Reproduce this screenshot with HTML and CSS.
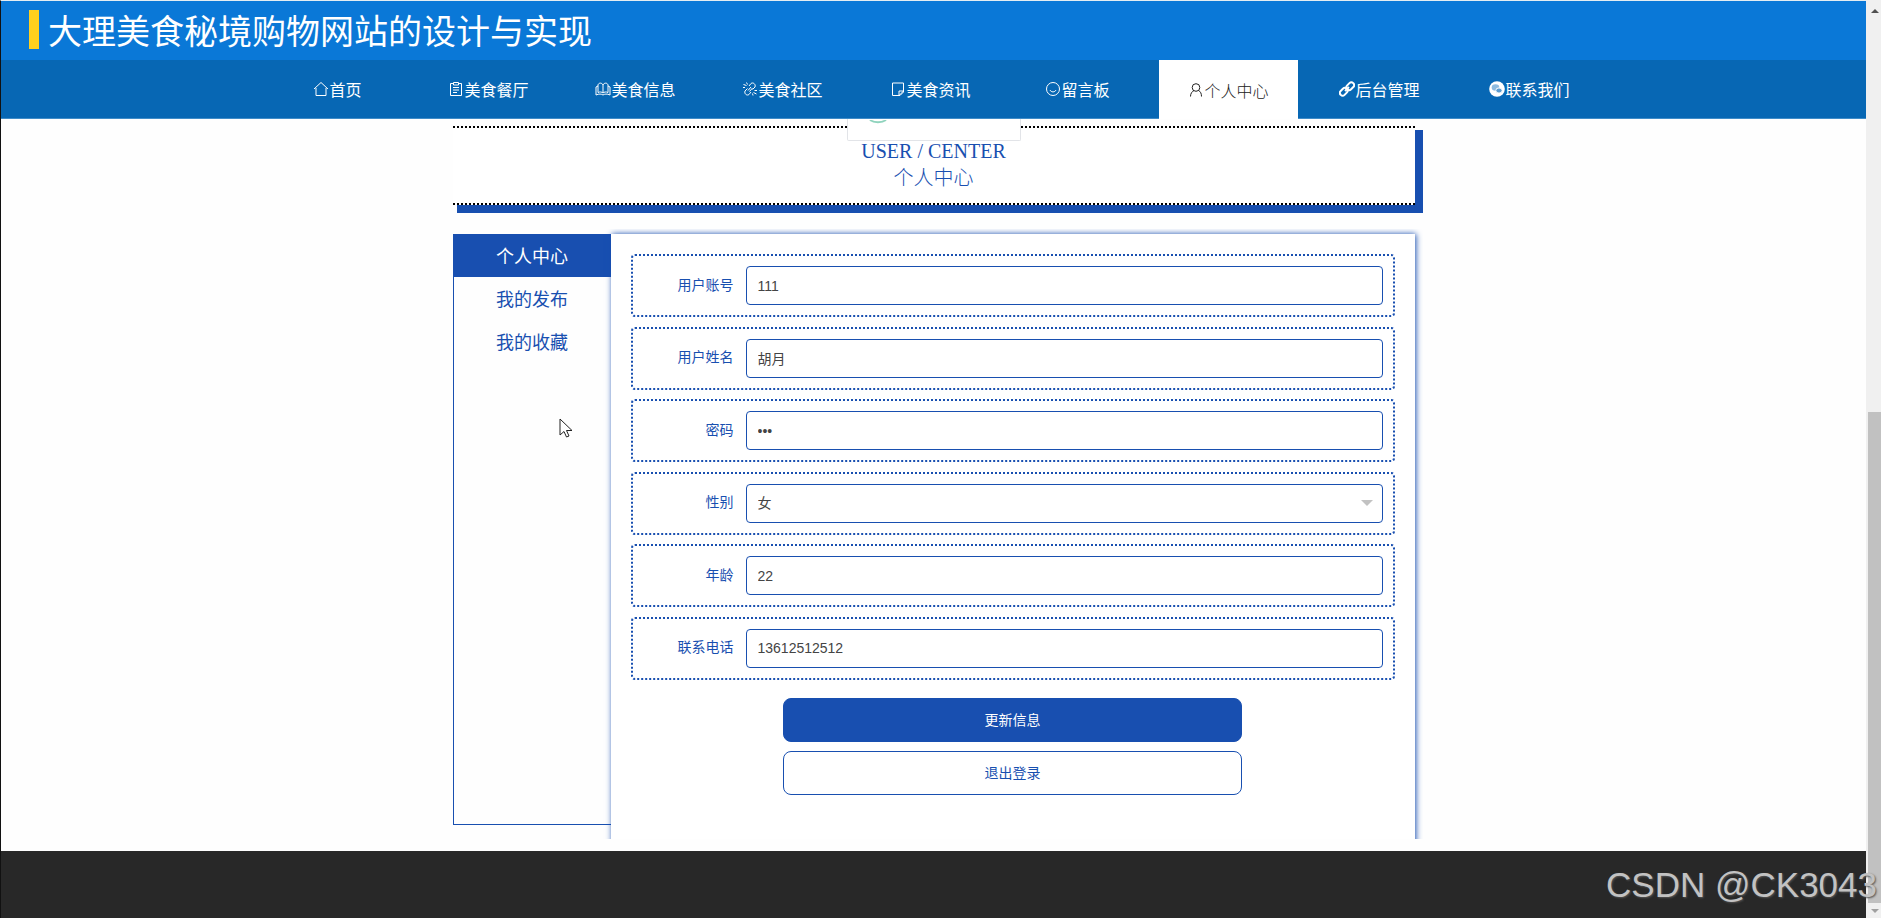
FILE: index.html
```html
<!DOCTYPE html>
<html lang="zh-CN">
<head>
<meta charset="utf-8">
<title>大理美食秘境购物网站的设计与实现</title>
<link rel="stylesheet" href="styles.css">
</head>
<body>
<div class="page">
  <header class="header">
    <h1 class="brand">大理美食秘境购物网站的设计与实现</h1>
    <nav class="nav">
      <a class="nav-link" href="#"><svg class="icon" viewBox="0 0 16 16"><path d="M1 8 8 1.500 15 8M3 7v7.500h10V7"/></svg>首页</a>
      <a class="nav-link" href="#"><svg class="icon" viewBox="0 0 16 16"><path d="M5 2.500H2.500v12h11v-12H11M5.500 1.500h5V4h-5zM5 6.500h6M5 9h6M5 11.500h4"/></svg>美食餐厅</a>
      <a class="nav-link" href="#"><svg class="icon" viewBox="0 0 16 16"><path d="M8 4C7 1.500 3.500 1.500 3 4v7.500c2-1 4-.5 5 .5 1-1 3-1.500 5-.5V4c-.5-2.500-4-2.500-5 0zM8 4v8M3 5 1 6v8c3-1.500 5.500-1 7 0 1.500-1 4-1.500 7 0V6l-2-1"/></svg>美食信息</a>
      <a class="nav-link" href="#"><svg class="icon" viewBox="0 0 16 16"><path d="m7 5 2-2.500c2-1.500 5 .5 4 3.500l-2.500 2.500M9 11l-2 2.500c-2 1.500-5-.5-4-3.500l2.500-2.500M6 9.500l3-3.500M7.500 10.500 10.500 7M1.500 3.500l3 1M4.500 1.500l1 2M1 6.500h2M15 9.500h-2.500M14.500 13l-3-1.500M10.500 12.500l.5 2"/></svg>美食社区</a>
      <a class="nav-link" href="#"><svg class="icon" viewBox="0 0 16 16"><path d="M13.500 10V2H2.500v12.500H9zM13.500 10H9v4.500M13.500 10v1L10 14.500H9"/></svg>美食资讯</a>
      <a class="nav-link" href="#"><svg class="icon" viewBox="0 0 16 16"><circle cx="8" cy="8" r="6.500"/><path d="M5 9c1 2.500 5 2.500 6 0"/></svg>留言板</a>
      <a class="nav-link nav-active" href="#"><svg class="icon" viewBox="0 0 16 16"><circle cx="8" cy="5.500" r="3.800"/><path d="M2.500 14.500c0-3 1.500-5 3.500-6M10.500 8.500c2 1 3 3 3 6"/></svg>个人中心</a>
      <a class="nav-link" href="#"><svg class="icon icon-bold" viewBox="0 0 16 16"><rect x="7" y="2.500" width="8.500" height="5.500" rx="2.700" transform="rotate(-45 11.200 5.200)"/><rect x="0.500" y="8" width="8.500" height="5.500" rx="2.700" transform="rotate(-45 4.800 10.800)"/><path d="m6 10 4-4"/></svg>后台管理</a>
      <a class="nav-link" href="#"><svg class="icon" viewBox="0 0 16 16"><circle class="disc" cx="8" cy="8" r="7.800"/><ellipse class="bubble" cx="6.500" cy="6.500" rx="3.800" ry="3.200"/><ellipse class="bubble bubble-front" cx="10" cy="9.500" rx="3.200" ry="2.600"/></svg>联系我们</a>
    </nav>
    <div class="popup"><svg class="popup-ring" viewBox="0 0 20 5"><path d="M2 0c4 3 12 3 16 0"/></svg></div>
  </header>

  <main class="main">
    <section class="banner">
      <p class="banner-line">USER / CENTER</p>
      <h2 class="banner-line">个人中心</h2>
    </section>
    <div class="center">
      <aside class="side">
        <a class="side-link side-active" href="#">个人中心</a>
        <a class="side-link" href="#">我的发布</a>
        <a class="side-link" href="#">我的收藏</a>
      </aside>
      <div class="panel-clip">
        <form class="panel">
          <div class="fields">
            <div class="field"><label class="label" for="account">用户账号</label><input class="input" id="account" type="text" value="111"></div>
            <div class="field"><label class="label" for="name">用户姓名</label><input class="input" id="name" type="text" value="胡月"></div>
            <div class="field"><label class="label" for="password">密码</label><input class="input" id="password" type="password" value="111"></div>
            <div class="field"><label class="label" for="gender">性别</label><div class="select-wrap"><select class="input" id="gender"><option>女</option><option>男</option></select></div></div>
            <div class="field"><label class="label" for="age">年龄</label><input class="input" id="age" type="text" value="22"></div>
            <div class="field"><label class="label" for="phone">联系电话</label><input class="input" id="phone" type="text" value="13612512512"></div>
          </div>
          <div class="actions">
            <button class="btn btn-primary" type="button">更新信息</button>
            <button class="btn" type="button">退出登录</button>
          </div>
        </form>
      </div>
    </div>
  </main>
  <footer class="footer"></footer>
</div>
<div class="scrollbar">
  <span class="arrow arrow-up"></span>
  <span class="thumb"></span>
  <span class="arrow arrow-down"></span>
</div>
<svg class="cursor" viewBox="0 0 14 21"><path d="M1 1v16l4-3.500 2.500 5.500 2.500-1-2.500-5.500H13z"/></svg>
<div class="watermark">CSDN @CK3043</div>
</body>
</html>
```
FILE: styles.css
```css
* {
  box-sizing: border-box;
}

body {
  margin: 0;
  min-height: 100vh;
  display: grid;
  grid-template-columns: 1fr 15px;
  position: relative;
  overflow: hidden;
  background: #fefefe;
  font-family: "Liberation Sans", "Noto Sans CJK SC", sans-serif;
  font-size: 14px;
  color: #333;
}

a {
  text-decoration: none;
}

.page {
  display: flex;
  flex-direction: column;
  border-left: 1px solid #111;
  border-top: 1px solid #e4edf2;
}

.header {
  position: relative;
  background: #0a78d7;
}

.brand {
  margin: 0 0 0 28px;
  padding-bottom: 2px;
  height: 59px;
  display: flex;
  align-items: center;
  gap: 9px;
  font-family: "Noto Sans CJK SC", sans-serif;
  font-size: 34px;
  font-weight: 400;
  line-height: 1;
  color: #fff;
}

.brand::before {
  content: "";
  width: 10px;
  height: 39px;
  background: #ffd01e;
}

.nav {
  display: grid;
  grid-template-columns: 154px 148px 146px 148px 148px 146px 156px 146px 154px;
  justify-content: center;
  justify-items: center;
  height: 59px;
  border-bottom: 1px solid #3f8cc8;
  background: #0767b4;
}

.nav-link {
  display: flex;
  align-items: center;
  padding: 0 29px;
  font-family: "Noto Sans CJK SC", sans-serif;
  font-size: 16px;
  color: #fff;
}

.nav-active {
  margin-bottom: -1px;
  background: #fff;
  color: #222;
  font-weight: 300;
}

.icon {
  width: 16px;
  height: 16px;
  fill: none;
  stroke: currentColor;
  stroke-width: 1;
}

.icon-bold {
  stroke-width: 2;
}

.disc {
  fill: #fff;
  stroke: none;
}

.bubble {
  fill: #8dbbe0;
  stroke: none;
}

.bubble-front {
  fill: #5b9bd0;
  stroke: #fff;
}

.popup {
  position: absolute;
  top: 100%;
  left: 50%;
  width: 174px;
  height: 22px;
  margin-left: -87px;
  padding: 1px 0 0 20px;
  border: 1px solid #e2e4e8;
  border-top: 0;
  border-radius: 0 0 2px 2px;
  background: #fff;
}

.popup-ring {
  display: block;
  width: 20px;
  height: 5px;
  fill: none;
  stroke: #8fd3bd;
  stroke-width: 2;
}

.main {
  width: 962px;
  margin: 0 auto;
  padding-top: 7px;
}

.banner {
  height: 79px;
  padding-top: 10px;
  border-top: 2px dotted #000;
  border-bottom: 2px dotted #000;
  background: #fff;
  box-shadow: 6px 6px 0 2px #184fb0;
  text-align: center;
  color: #184fb0;
}

.banner-line {
  margin: 0;
  font-family: "Liberation Serif", "Noto Sans CJK SC", serif;
  font-size: 20px;
  font-weight: 300;
  line-height: 27px;
}

.center {
  display: flex;
  align-items: flex-start;
  margin-top: 24px;
}

.side {
  width: 158px;
  height: 591px;
  margin-top: 5px;
  border-left: 1px solid #184fb0;
  border-bottom: 1px solid #184fb0;
}

.side-link {
  display: block;
  font-family: "Noto Sans CJK SC", sans-serif;
  font-size: 18px;
  line-height: 43px;
  text-align: center;
  color: #184fb0;
}

.side-active {
  background: #184fb0;
  color: #fff;
}

.panel-clip {
  flex: 1;
  height: 610px;
  margin: 0 -8px;
  padding: 5px 8px 0;
  overflow: hidden;
}

.panel {
  height: 620px;
  padding: 20px;
  background: #fff;
  box-shadow: 1px 0 6px #184fb0;
}

.fields {
  display: grid;
  align-content: space-between;
  height: 426px;
}

.field {
  display: flex;
  align-items: center;
  gap: 12px;
  padding: 10px;
  border: 2px dotted #184fb0;
  border-radius: 4px;
}

.label {
  width: 91px;
  padding-bottom: 4px;
  text-align: right;
  color: #184fb0;
}

.input {
  flex: 1;
  width: 100%;
  height: 39px;
  padding: 0 11px;
  border: 1px solid #184fb0;
  border-radius: 4px;
  background: #fff;
  font: inherit;
  color: #444;
  appearance: none;
}

.select-wrap {
  position: relative;
  flex: 1;
  display: flex;
}

.select-wrap::after {
  content: "";
  position: absolute;
  right: 10px;
  top: 16px;
  border: 6px solid transparent;
  border-top-color: #c2c2c2;
  border-bottom: 0;
}

.actions {
  display: grid;
  gap: 9px;
  width: 60%;
  margin: 18px auto 0;
}

.btn {
  height: 44px;
  padding: 0 6px 3px;
  border: 1px solid #184fb0;
  border-radius: 8px;
  background: #fff;
  font: inherit;
  color: #184fb0;
}

.btn-primary {
  background: #184fb0;
  color: #fff;
}

.footer {
  flex: 1;
  min-height: 60px;
  margin-top: 12px;
  background: #282828;
}

.scrollbar {
  display: flex;
  flex-direction: column;
  align-items: center;
  padding: 9px 0 5px 2px;
  background: #f0f0f0;
}

.arrow {
  border: 4px solid transparent;
}

.arrow-up {
  border-top: 0;
  border-bottom-color: #505050;
}

.arrow-down {
  margin-top: 6px;
  border-bottom: 0;
  border-top-color: #a0a0a0;
}

.thumb {
  width: 100%;
  flex: 1;
  margin-top: 399px;
  background: #c1c1c1;
}

.cursor {
  position: absolute;
  left: 559px;
  top: 418px;
  width: 14px;
  height: 21px;
  fill: #fff;
  stroke: #222;
  stroke-width: 1;
}

.watermark {
  position: absolute;
  right: 4px;
  bottom: 13px;
  font-size: 35px;
  line-height: 40px;
  color: #c2c2c2;
  text-shadow: 1px 1px 2px #555;
}
```
